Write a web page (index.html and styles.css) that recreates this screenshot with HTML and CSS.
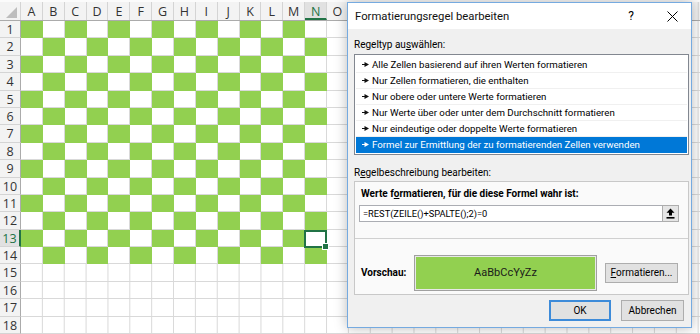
FILE: index.html
```html
<!DOCTYPE html>
<html lang="de">
<head>
<meta charset="utf-8">
<title>Formatierungsregel bearbeiten</title>
<link rel="stylesheet" href="styles.css">
</head>
<body>
<div class="sheet">
  <div class="hrow">
    <div class="corner"><span class="tri"></span></div>
    <div class="ch">A</div><div class="ch">B</div><div class="ch">C</div><div class="ch">D</div><div class="ch">E</div><div class="ch">F</div><div class="ch">G</div><div class="ch">H</div><div class="ch">I</div><div class="ch">J</div><div class="ch">K</div><div class="ch">L</div><div class="ch">M</div><div class="ch sel">N</div><div class="ch">O</div><div class="chfill"></div>
  </div>
  <div class="row"><div class="rh">1</div><div class="c g"></div><div class="c"></div><div class="c g"></div><div class="c"></div><div class="c g"></div><div class="c"></div><div class="c g"></div><div class="c"></div><div class="c g"></div><div class="c"></div><div class="c g"></div><div class="c"></div><div class="c g"></div><div class="c"></div><div class="fill"></div></div>
  <div class="row"><div class="rh">2</div><div class="c"></div><div class="c g"></div><div class="c"></div><div class="c g"></div><div class="c"></div><div class="c g"></div><div class="c"></div><div class="c g"></div><div class="c"></div><div class="c g"></div><div class="c"></div><div class="c g"></div><div class="c"></div><div class="c g"></div><div class="fill"></div></div>
  <div class="row"><div class="rh">3</div><div class="c g"></div><div class="c"></div><div class="c g"></div><div class="c"></div><div class="c g"></div><div class="c"></div><div class="c g"></div><div class="c"></div><div class="c g"></div><div class="c"></div><div class="c g"></div><div class="c"></div><div class="c g"></div><div class="c"></div><div class="fill"></div></div>
  <div class="row"><div class="rh">4</div><div class="c"></div><div class="c g"></div><div class="c"></div><div class="c g"></div><div class="c"></div><div class="c g"></div><div class="c"></div><div class="c g"></div><div class="c"></div><div class="c g"></div><div class="c"></div><div class="c g"></div><div class="c"></div><div class="c g"></div><div class="fill"></div></div>
  <div class="row"><div class="rh">5</div><div class="c g"></div><div class="c"></div><div class="c g"></div><div class="c"></div><div class="c g"></div><div class="c"></div><div class="c g"></div><div class="c"></div><div class="c g"></div><div class="c"></div><div class="c g"></div><div class="c"></div><div class="c g"></div><div class="c"></div><div class="fill"></div></div>
  <div class="row"><div class="rh">6</div><div class="c"></div><div class="c g"></div><div class="c"></div><div class="c g"></div><div class="c"></div><div class="c g"></div><div class="c"></div><div class="c g"></div><div class="c"></div><div class="c g"></div><div class="c"></div><div class="c g"></div><div class="c"></div><div class="c g"></div><div class="fill"></div></div>
  <div class="row"><div class="rh">7</div><div class="c g"></div><div class="c"></div><div class="c g"></div><div class="c"></div><div class="c g"></div><div class="c"></div><div class="c g"></div><div class="c"></div><div class="c g"></div><div class="c"></div><div class="c g"></div><div class="c"></div><div class="c g"></div><div class="c"></div><div class="fill"></div></div>
  <div class="row"><div class="rh">8</div><div class="c"></div><div class="c g"></div><div class="c"></div><div class="c g"></div><div class="c"></div><div class="c g"></div><div class="c"></div><div class="c g"></div><div class="c"></div><div class="c g"></div><div class="c"></div><div class="c g"></div><div class="c"></div><div class="c g"></div><div class="fill"></div></div>
  <div class="row"><div class="rh">9</div><div class="c g"></div><div class="c"></div><div class="c g"></div><div class="c"></div><div class="c g"></div><div class="c"></div><div class="c g"></div><div class="c"></div><div class="c g"></div><div class="c"></div><div class="c g"></div><div class="c"></div><div class="c g"></div><div class="c"></div><div class="fill"></div></div>
  <div class="row"><div class="rh">10</div><div class="c"></div><div class="c g"></div><div class="c"></div><div class="c g"></div><div class="c"></div><div class="c g"></div><div class="c"></div><div class="c g"></div><div class="c"></div><div class="c g"></div><div class="c"></div><div class="c g"></div><div class="c"></div><div class="c g"></div><div class="fill"></div></div>
  <div class="row"><div class="rh">11</div><div class="c g"></div><div class="c"></div><div class="c g"></div><div class="c"></div><div class="c g"></div><div class="c"></div><div class="c g"></div><div class="c"></div><div class="c g"></div><div class="c"></div><div class="c g"></div><div class="c"></div><div class="c g"></div><div class="c"></div><div class="fill"></div></div>
  <div class="row"><div class="rh">12</div><div class="c"></div><div class="c g"></div><div class="c"></div><div class="c g"></div><div class="c"></div><div class="c g"></div><div class="c"></div><div class="c g"></div><div class="c"></div><div class="c g"></div><div class="c"></div><div class="c g"></div><div class="c"></div><div class="c g"></div><div class="fill"></div></div>
  <div class="row"><div class="rh sel">13</div><div class="c g"></div><div class="c"></div><div class="c g"></div><div class="c"></div><div class="c g"></div><div class="c"></div><div class="c g"></div><div class="c"></div><div class="c g"></div><div class="c"></div><div class="c g"></div><div class="c"></div><div class="c g"></div><div class="c act"></div><div class="fill"></div></div>
  <div class="row"><div class="rh">14</div><div class="c"></div><div class="c g"></div><div class="c"></div><div class="c g"></div><div class="c"></div><div class="c g"></div><div class="c"></div><div class="c g"></div><div class="c"></div><div class="c g"></div><div class="c"></div><div class="c g"></div><div class="c"></div><div class="c g"></div><div class="fill"></div></div>
  <div class="row"><div class="rh">15</div><div class="fill"></div></div>
  <div class="row"><div class="rh">16</div><div class="fill"></div></div>
  <div class="row"><div class="rh">17</div><div class="fill"></div></div>
  <div class="row"><div class="rh">18</div><div class="fill"></div></div>
</div>

<div class="dialog">
  <div class="titlebar">
    <span class="title">Formatierungsregel bearbeiten</span>
    <span class="help">?</span>
    <span class="close"><svg width="11" height="11" viewBox="0 0 11 11"><path d="M0.5 0.5 L10.5 10.5 M10.5 0.5 L0.5 10.5" stroke="#000" stroke-width="1" fill="none"/></svg></span>
  </div>
  <div class="body">
    <div class="label">Regeltyp au<u>s</u>wählen:</div>
    <ul class="list">
      <li><svg class="mark" width="7" height="5" viewBox="0 0 7 5"><path d="M0 2 H2.5 V0 L7 2.5 L2.5 5 V3 H0 Z"/></svg>Alle Zellen basierend auf ihren Werten formatieren</li>
      <li><svg class="mark" width="7" height="5" viewBox="0 0 7 5"><path d="M0 2 H2.5 V0 L7 2.5 L2.5 5 V3 H0 Z"/></svg>Nur Zellen formatieren, die enthalten</li>
      <li><svg class="mark" width="7" height="5" viewBox="0 0 7 5"><path d="M0 2 H2.5 V0 L7 2.5 L2.5 5 V3 H0 Z"/></svg>Nur obere oder untere Werte formatieren</li>
      <li><svg class="mark" width="7" height="5" viewBox="0 0 7 5"><path d="M0 2 H2.5 V0 L7 2.5 L2.5 5 V3 H0 Z"/></svg>Nur Werte über oder unter dem Durchschnitt formatieren</li>
      <li><svg class="mark" width="7" height="5" viewBox="0 0 7 5"><path d="M0 2 H2.5 V0 L7 2.5 L2.5 5 V3 H0 Z"/></svg>Nur eindeutige oder doppelte Werte formatieren</li>
      <li class="selected"><svg class="mark" width="7" height="5" viewBox="0 0 7 5"><path d="M0 2 H2.5 V0 L7 2.5 L2.5 5 V3 H0 Z"/></svg>Formel zur Ermittlung der zu formatierenden Zellen verwenden</li>
    </ul>
    <div class="label label2">R<u>e</u>gelbeschreibung bearbeiten:</div>
    <div class="group">
      <div class="gtop">
        <div class="strong glabel">Werte f<u>o</u>rmatieren, für die diese Formel wahr ist:</div>
        <div class="formula">
          <span class="ftext">=REST(ZEILE()+SPALTE();2)=0</span>
          <span class="pick"><svg width="9" height="11" viewBox="0 0 9 11"><path d="M4.5 0.5 L8.5 4.8 H6 V7.5 H3 V4.8 H0.5 Z" fill="#000"/><rect x="0.5" y="9" width="8" height="1.6" fill="#000"/></svg></span>
        </div>
      </div>
      <div class="gbottom">
        <span class="strong vlabel">Vorschau:</span>
        <div class="preview">AaBbCcYyZz</div>
        <span class="btn fmt"><u>F</u>ormatieren...</span>
      </div>
    </div>
    <div class="actions">
      <span class="btn ok">OK</span>
      <span class="btn">Abbrechen</span>
    </div>
  </div>
</div>
</body>
</html>
```

FILE: styles.css
```css
* { box-sizing: border-box; }
html, body { margin: 0; padding: 0; }
body {
  width: 700px;
  height: 334px;
  overflow: hidden;
  position: relative;
  background: #fff;
  font-family: Roboto, "Open Sans", sans-serif;
}

/* ---------- spreadsheet ---------- */
.sheet {
  display: flex;
  flex-direction: column;
  font-family: "Open Sans", sans-serif;
  font-size: 12.5px;
  color: #333;
}
.hrow {
  display: flex;
  height: 21px;
  background: #f3f3f3;
  border-top: 2px solid #fbfbfb;
  border-bottom: 1px solid #ababab;
}
.corner {
  width: 21px;
  flex: none;
  position: relative;
  border-right: 1px solid #d4d4d4;
}
.tri {
  position: absolute;
  right: 3px;
  bottom: 2px;
  width: 0;
  height: 0;
  border-style: solid;
  border-width: 0 0 11px 11px;
  border-color: transparent transparent #bdbdbd transparent;
}
.ch {
  width: 21.86px;
  flex: none;
  text-align: center;
  line-height: 16px;
  padding-top: 2px;
  border-right: 1px solid #d4d4d4;
}
.ch.sel {
  background: #e1e1e1;
  color: #217346;
  border-bottom: 2px solid #217346;
}
.chfill {
  flex: 1;
  background-image: linear-gradient(to left, #d4d4d4 1px, transparent 1px);
  background-size: 21.86px 100%;
}
.row {
  display: flex;
  height: 17.4px;
}
.rh {
  width: 21px;
  flex: none;
  text-align: center;
  line-height: 17px;
  background: #f3f3f3;
  border-right: 1px solid #ababab;
  border-bottom: 1px solid #d4d4d4;
}
.rh.sel {
  background: #e1e1e1;
  color: #217346;
  border-right: 2px solid #217346;
}
.c {
  width: 21.86px;
  flex: none;
  border-right: 1px solid #d9d9d9;
  border-bottom: 1px solid #d9d9d9;
}
.c.g {
  background: #92d050;
  border-color: #92d050;
}
.c.act { position: relative; z-index: 2; }
.c.act::after {
  content: "";
  position: absolute;
  left: -1px;
  top: 0;
  right: -1px;
  bottom: -2px;
  border: 2px solid #217346;
}
.c.act::before {
  content: "";
  position: absolute;
  right: -3px;
  bottom: -4px;
  width: 5px;
  height: 5px;
  background: #217346;
  border: 1px solid #fff;
  z-index: 3;
}
.fill {
  flex: 1;
  border-bottom: 1px solid #d9d9d9;
  background-image: linear-gradient(to left, #d9d9d9 1px, transparent 1px);
  background-size: 21.86px 100%;
}

/* ---------- dialog ---------- */
.dialog {
  position: absolute;
  left: 347px;
  top: 2px;
  width: 345px;
  height: 326px;
  border: 1px solid #75aae0;
  background: #f0f0f0;
  box-shadow: 0 0 12px rgba(0, 0, 0, 0.28);
  display: flex;
  flex-direction: column;
  font-size: 10px;
  color: #000;
  white-space: nowrap;
}
.titlebar {
  height: 26px;
  flex: none;
  background: #fff;
  display: flex;
  align-items: center;
  padding-left: 7px;
}
.title { flex: 1; font-size: 11.3px; color: #111; }
.help {
  width: 38px;
  text-align: center;
  font-size: 12px;
}
.close {
  width: 38px;
  margin-left: 3px;
  display: flex;
  justify-content: center;
}
.body {
  flex: 1;
  display: flex;
  flex-direction: column;
  padding: 0 2px 0 6px;
}
.label {
  margin-top: 8px;
  line-height: 16px;
}
.label2 { margin-top: 10px; }
.list {
  list-style: none;
  margin: 1px 0 0 0;
  padding: 2px 1px 1px 1px;
  background: #fff;
  border: 1px solid #828790;
  font-size: 9.7px;
}
.list li {
  height: 16px;
  line-height: 15px;
  border-bottom: 1px solid #f0f0f0;
  display: flex;
  align-items: center;
  padding-left: 6px;
}
.list li .mark { fill: #111; margin-right: 3px; }
.list li.selected {
  background: #0078d7;
  color: #fff;
  border-bottom-color: #0078d7;
}
.list li.selected .mark { fill: #fff; }

.group {
  margin-top: 0;
  background: #fafafa;
  border: 1px solid #c8c8c8;
  display: flex;
  flex-direction: column;
}
.gtop {
  height: 57px;
  padding: 4px 9px 0 4px;
  border-bottom: 1px solid #d0d0d0;
}
.strong { font-weight: 700; }
.glabel { line-height: 16px; padding-left: 2px; }
.formula {
  margin-top: 3px;
  height: 17px;
  background: #fff;
  border: 1px solid #abadb3;
  display: flex;
  align-items: center;
}
.ftext { flex: 1; padding-left: 3px; line-height: 15px; font-size: 9.3px; }
.pick {
  width: 17px;
  height: 17px;
  margin: -1px -1px -1px 0;
  border: 1px solid #adadad;
  background: #e5e5e5;
  display: flex;
  align-items: center;
  justify-content: center;
}
.gbottom {
  height: 55px;
  display: flex;
  align-items: center;
  padding: 15px 10px 3px 6px;
}
.vlabel { width: 53px; }
.preview {
  width: 183px;
  height: 36px;
  background: #92d050;
  border: 1px solid #a0a0a0;
  box-shadow: inset 0 0 0 1px #e8e8e8;
  display: flex;
  align-items: center;
  justify-content: center;
  font-size: 11px;
  color: #1a1a1a;
}
.btn {
  display: flex;
  align-items: center;
  justify-content: center;
  background: #e1e1e1;
  border: 1px solid #adadad;
  height: 20px;
}
.fmt { width: 73px; margin-left: 8px; }
.actions {
  display: flex;
  justify-content: flex-end;
  gap: 10px;
  margin-top: 5px;
  padding-right: 5px;
}
.actions .btn { width: 63px; height: 21px; }
.actions .ok { width: 62px; border: 2px solid #3d8bd9; }
```
